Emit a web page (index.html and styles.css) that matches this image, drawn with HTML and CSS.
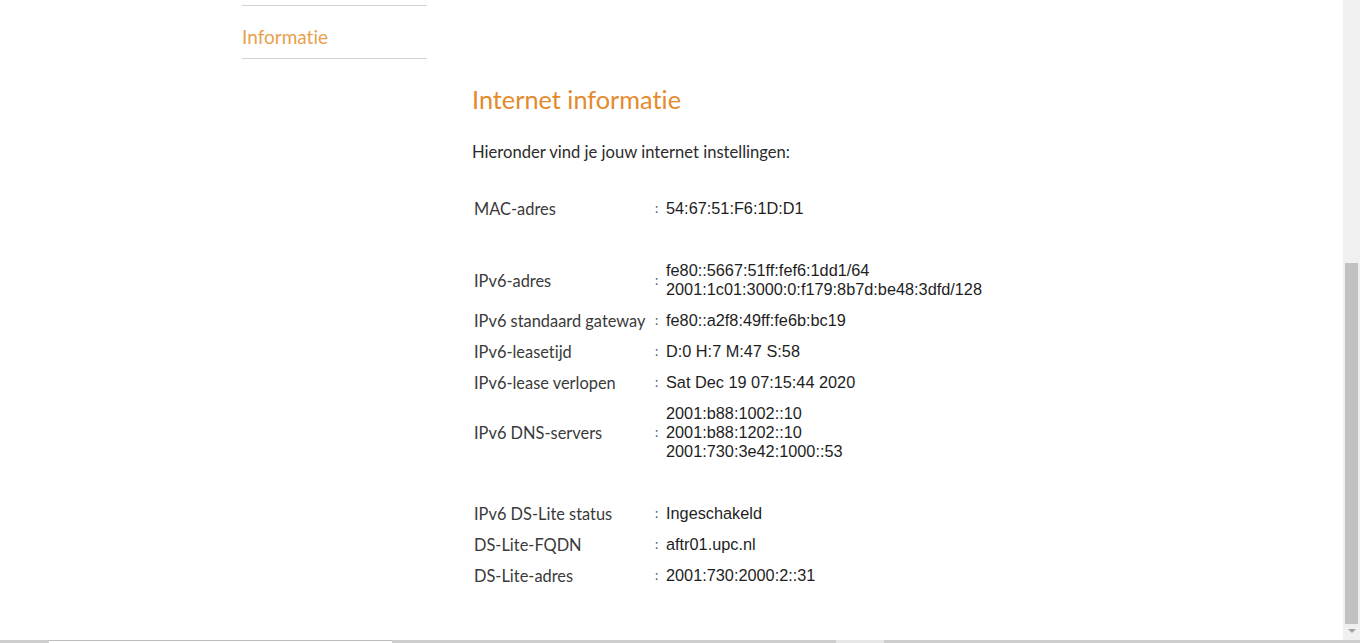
FILE: index.html
```html
<!DOCTYPE html>
<html lang="nl">
<head>
  <meta charset="UTF-8" />
  <meta name="viewport" content="width=device-width, initial-scale=1.0"/>
  <title>Internet informatie</title>
  <link rel="stylesheet" href="styles.css">
</head>
<body>
  <div class="window">
    <div class="page">
      <aside class="sidebar">
        <a class="side-item" href="#">Informatie</a>
      </aside>

      <main class="content">
        <h1>Internet informatie</h1>
        <p class="intro">Hieronder vind je jouw internet instellingen:</p>

        <table class="info">
          <tr>
            <td class="label">MAC-adres</td>
            <td class="colon">:</td>
            <td class="value">54:67:51:F6:1D:D1</td>
          </tr>
          <tr class="spacer"><td colspan="3"></td></tr>
          <tr>
            <td class="label">IPv6-adres</td>
            <td class="colon">:</td>
            <td class="value">fe80::5667:51ff:fef6:1dd1/64<br>2001:1c01:3000:0:f179:8b7d:be48:3dfd/128</td>
          </tr>
          <tr>
            <td class="label">IPv6 standaard gateway</td>
            <td class="colon">:</td>
            <td class="value">fe80::a2f8:49ff:fe6b:bc19</td>
          </tr>
          <tr>
            <td class="label">IPv6-leasetijd</td>
            <td class="colon">:</td>
            <td class="value">D:0 H:7 M:47 S:58</td>
          </tr>
          <tr>
            <td class="label">IPv6-lease verlopen</td>
            <td class="colon">:</td>
            <td class="value">Sat Dec 19 07:15:44 2020</td>
          </tr>
          <tr>
            <td class="label">IPv6 DNS-servers</td>
            <td class="colon">:</td>
            <td class="value">2001:b88:1002::10<br>2001:b88:1202::10<br>2001:730:3e42:1000::53</td>
          </tr>
          <tr class="spacer"><td colspan="3"></td></tr>
          <tr>
            <td class="label">IPv6 DS-Lite status</td>
            <td class="colon">:</td>
            <td class="value">Ingeschakeld</td>
          </tr>
          <tr>
            <td class="label">DS-Lite-FQDN</td>
            <td class="colon">:</td>
            <td class="value">aftr01.upc.nl</td>
          </tr>
          <tr>
            <td class="label">DS-Lite-adres</td>
            <td class="colon">:</td>
            <td class="value">2001:730:2000:2::31</td>
          </tr>
        </table>
      </main>
    </div>

    <div class="scrollbar">
      <div class="thumb"></div>
      <div class="arrow"></div>
    </div>
  </div>

  <div class="taskbar">
    <span class="tab"></span>
    <span class="tab light"></span>
  </div>
</body>
</html>
```

FILE: styles.css
```css
html, body {
  margin: 0;
  height: 100%;
  overflow: hidden;
}

body {
  display: flex;
  flex-direction: column;
  background: #fff;
  font-family: Lato, "Open Sans", sans-serif;
  font-variant-ligatures: none;
  color: #333;
}

.window {
  flex: 1;
  display: flex;
  min-height: 0;
}

.page {
  flex: 1;
  display: flex;
  padding-left: 242px;
}

/* left navigation */
.sidebar {
  width: 185px;
  padding-top: 5px;
}

.side-item {
  display: block;
  border-top: 1px solid #d2d2d2;
  border-bottom: 1px solid #d2d2d2;
  padding: 20px 0 10px;
  font-size: 19px;
  line-height: 22px;
  color: #e8a04c;
  text-decoration: none;
}

/* main content */
.content {
  margin-left: 45px;
  padding-top: 84px;
}

h1 {
  margin: 0;
  font-size: 25.3px;
  font-weight: 400;
  line-height: 30px;
  color: #e38b2c;
}

.intro {
  margin: 28px 0 0;
  font-size: 16.6px;
  line-height: 20px;
  color: #2b2b2b;
}

.info {
  margin-top: 31px;
  border-collapse: collapse;
  font-size: 16.4px;
}

.info td {
  padding: 6px 0;
  line-height: 19px;
  vertical-align: middle;
}

.info .label {
  width: 181px;
  padding-left: 2px;
  color: #3a3a3a;
}

.info .colon {
  width: 11px;
  color: #555;
  font-size: 13px;
}

.info .value {
  font-family: "Liberation Sans", Arial, sans-serif;
  font-size: 16.3px;
  color: #1e1e1e;
}

.info .spacer td {
  height: 19px;
}

/* fake browser scrollbar */
.scrollbar {
  width: 17px;
  background: #f0f0f0;
  display: flex;
  flex-direction: column;
  align-items: center;
  padding-top: 263px;
}

.thumb {
  width: 13px;
  height: 361px;
  background: #c1c1c1;
}

.arrow {
  margin-top: 5px;
  width: 0;
  height: 0;
  border-left: 4px solid transparent;
  border-right: 4px solid transparent;
  border-top: 4px solid #a3a3a3;
}

.taskbar {
  height: 3px;
  background: #cdcdcd;
  display: flex;
  padding-left: 49px;
  gap: 444px;
}

.tab {
  width: 343px;
  background: #fff;
  border-top: 1px solid #bdbdbd;
}

.tab.light {
  width: 48px;
  background: #e6e6e6;
  border: none;
}
```
